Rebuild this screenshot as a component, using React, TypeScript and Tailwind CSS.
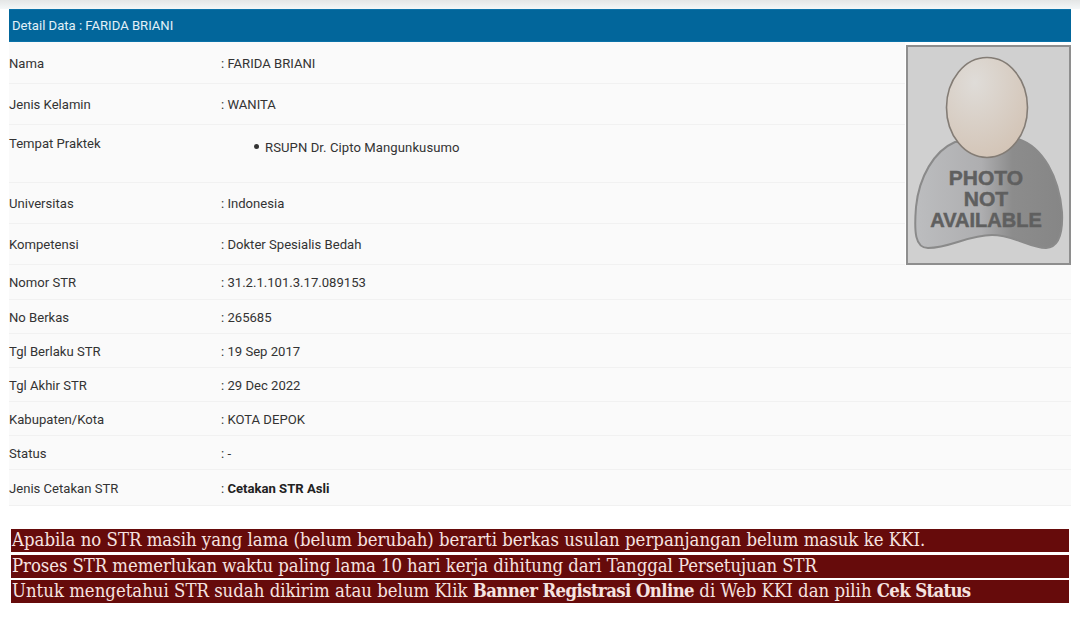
const topRows: { label: string; value: string; h: string }[] = [
  { label: "Nama", value: ": FARIDA BRIANI", h: "h-[41px]" },
  { label: "Jenis Kelamin", value: ": WANITA", h: "h-[41px]" },
];
const midRows = [
  { label: "Universitas", value: ": Indonesia" },
  { label: "Kompetensi", value: ": Dokter Spesialis Bedah" },
];
const lowRows = [
  { label: "Nomor STR", value: ": 31.2.1.101.3.17.089153", h: "h-[35px]" },
  { label: "No Berkas", value: ": 265685", h: "h-[34px]" },
  { label: "Tgl Berlaku STR", value: ": 19 Sep 2017", h: "h-[34px]" },
  { label: "Tgl Akhir STR", value: ": 29 Dec 2022", h: "h-[34px]" },
  { label: "Kabupaten/Kota", value: ": KOTA DEPOK", h: "h-[34px]" },
  { label: "Status", value: ": -", h: "h-[34px]" },
];

function Row({ label, value, h }: { label: string; value: React.ReactNode; h: string }) {
  return (
    <div className={`flex items-center pt-[2px] border-b border-[#f1f1f1] ${h}`}>
      <div className="w-[212px] shrink-0">{label}</div>
      <div>{value}</div>
    </div>
  );
}

function Photo() {
  return (
    <div className="w-[165px] h-[220px] shrink-0 border-2 border-[#8e8e8e] bg-[#d0d0d0] ml-px">
      <svg viewBox="0 0 161 216" width="161" height="216">
        <defs>
          <linearGradient id="body" x1="0" x2="1" y1="0" y2="0">
            <stop offset="0" stopColor="#bcbdbf" />
            <stop offset="0.45" stopColor="#aeaeb0" />
            <stop offset="0.66" stopColor="#8c8c8c" />
            <stop offset="1" stopColor="#868686" />
          </linearGradient>
          <radialGradient id="face" cx="0.35" cy="0.25" r="0.8">
            <stop offset="0" stopColor="#dfdcd8" />
            <stop offset="1" stopColor="#d3c4b6" />
          </radialGradient>
        </defs>
        <path
          d="M47 95 C26 104 11 130 8 160 C6 185 7 201 20 201 C42 201 60 188 84 188 C106 188 122 201 138 201 C152 200 155 185 154 165 C151 130 135 100 110 92 Z"
          fill="url(#body)"
          stroke="#8a8a8a"
          strokeWidth="2"
        />
        <ellipse cx="79" cy="60.5" rx="40.5" ry="50" fill="url(#face)" stroke="#837c75" strokeWidth="1.6" />
        <text textAnchor="middle" fill="#5f5f5f" stroke="#5f5f5f" strokeWidth="0.5" fontSize="21" fontWeight="700" fontFamily="'Liberation Sans', sans-serif">
          <tspan x="78" y="138">PHOTO</tspan>
          <tspan x="78" y="159">NOT</tspan>
          <tspan x="78" y="180" fontSize="20">AVAILABLE</tspan>
        </text>
      </svg>
    </div>
  );
}

export default function App() {
  return (
    <div className="w-[1080px] h-[622px] overflow-hidden bg-white font-['Roboto',sans-serif] text-[13.1px] text-[#333333]">
      <div className="h-[9px] bg-gradient-to-b from-[#e4e6e6] to-[#f4f7f8]" />
      <div className="pl-[9px] pr-[9px]">
        <div className="h-[33px] pt-[1px] bg-[#02669b] border-t border-b border-[#0b72a8] flex items-center pl-[3px] text-[#e3f1f8]">
          Detail Data : FARIDA BRIANI
        </div>
        <div className="bg-[#fafafa]">
          <div className="flex">
            <div className="flex-1 pt-px">
              {topRows.map((r) => (
                <Row key={r.label} {...r} />
              ))}
              <div className="flex h-[58px] border-b border-[#f1f1f1]">
                <div className="w-[212px] shrink-0 pt-[9px]">Tempat Praktek</div>
                <div className="pt-[13px] pl-[33px] flex items-start">
                  <span className="w-[5px] h-[5px] rounded-full bg-[#333333] mt-[6px] mr-[6px]" />
                  <span className="tracking-[0.08px]">RSUPN Dr. Cipto Mangunkusumo</span>
                </div>
              </div>
              {midRows.map((r) => (
                <Row key={r.label} {...r} h="h-[41px]" />
              ))}
            </div>
            <div className="pt-[3px] bg-white">
              <Photo />
            </div>
          </div>
          {lowRows.map((r) => (
            <Row key={r.label} {...r} />
          ))}
          <div className="flex items-center pt-[2px] h-[36px] border-b border-[#f1f1f1]">
            <div className="w-[212px] shrink-0">Jenis Cetakan STR</div>
            <div>: <b className="text-[#222222]">Cetakan STR Asli</b></div>
          </div>
        </div>
        <div className="mt-[23px] ml-[2px] mr-[2px] flex flex-col gap-[2.5px] font-['DejaVu_Serif_Condensed','DejaVu_Serif',serif] text-[18.4px] leading-[22px] text-[#f6e3e0]">
          <div className="bg-[#660b0b] h-[23px] pl-px whitespace-nowrap">
            Apabila no STR masih yang lama (belum berubah) berarti berkas usulan perpanjangan belum masuk ke KKI.
          </div>
          <div className="bg-[#660b0b] h-[23px] pl-px whitespace-nowrap tracking-[-0.07px]">
            Proses STR memerlukan waktu paling lama 10 hari kerja dihitung dari Tanggal Persetujuan STR
          </div>
          <div className="bg-[#660b0b] h-[23px] pl-px whitespace-nowrap">
            Untuk mengetahui STR sudah dikirim atau belum Klik <b className="tracking-[-0.58px]">Banner Registrasi Online</b> di Web KKI dan pilih <b className="tracking-[-0.65px]">Cek Status</b>
          </div>
        </div>
      </div>
    </div>
  );
}
